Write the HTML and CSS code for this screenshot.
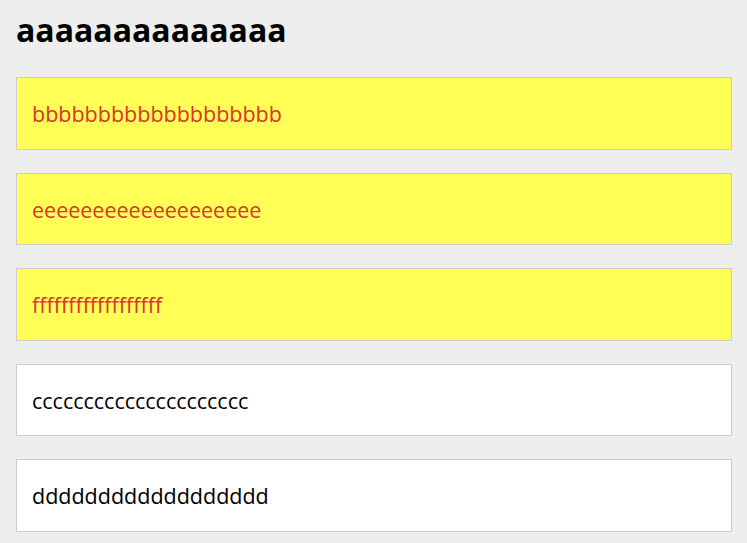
FILE: index.html
```html
<!DOCTYPE html>
<html lang="en">
<head>
    <meta charset="UTF-8">
    <meta name="viewport" content="width=device-width, initial-scale=1.0">
    <title>Boxes</title>
    <link rel="stylesheet" href="styles.css">
</head>
<body>
    <div class="container">
        <h1>aaaaaaaaaaaaaa</h1>
        <div class="box highlight">bbbbbbbbbbbbbbbbbbb</div>
        <div class="box highlight">eeeeeeeeeeeeeeeeeee</div>
        <div class="box highlight">ffffffffffffffffff</div>
        <div class="box">ccccccccccccccccccccc</div>
        <div class="box">dddddddddddddddddd</div>
    </div>
</body>
</html>
```

FILE: styles.css
```css
* {
    box-sizing: border-box;
}

body {
    margin: 0;
    background: #eeeeee;
    font-family: 'Open Sans', 'Noto Sans', sans-serif;
    color: #000;
}

.container {
    padding: 0 15px 0 16px;
}

h1 {
    font-size: 32px;
    line-height: 35px;
    font-weight: 700;
    margin: 12px 0 30px;
}

.box {
    background: #ffffff;
    border: 1px solid #cccccc;
    padding: 21px 15px 19.5px;
    font-size: 21.5px;
    line-height: 30px;
    margin-bottom: 23px;
}

.highlight {
    background: #ffff55;
    color: #dd3333;
}
```
